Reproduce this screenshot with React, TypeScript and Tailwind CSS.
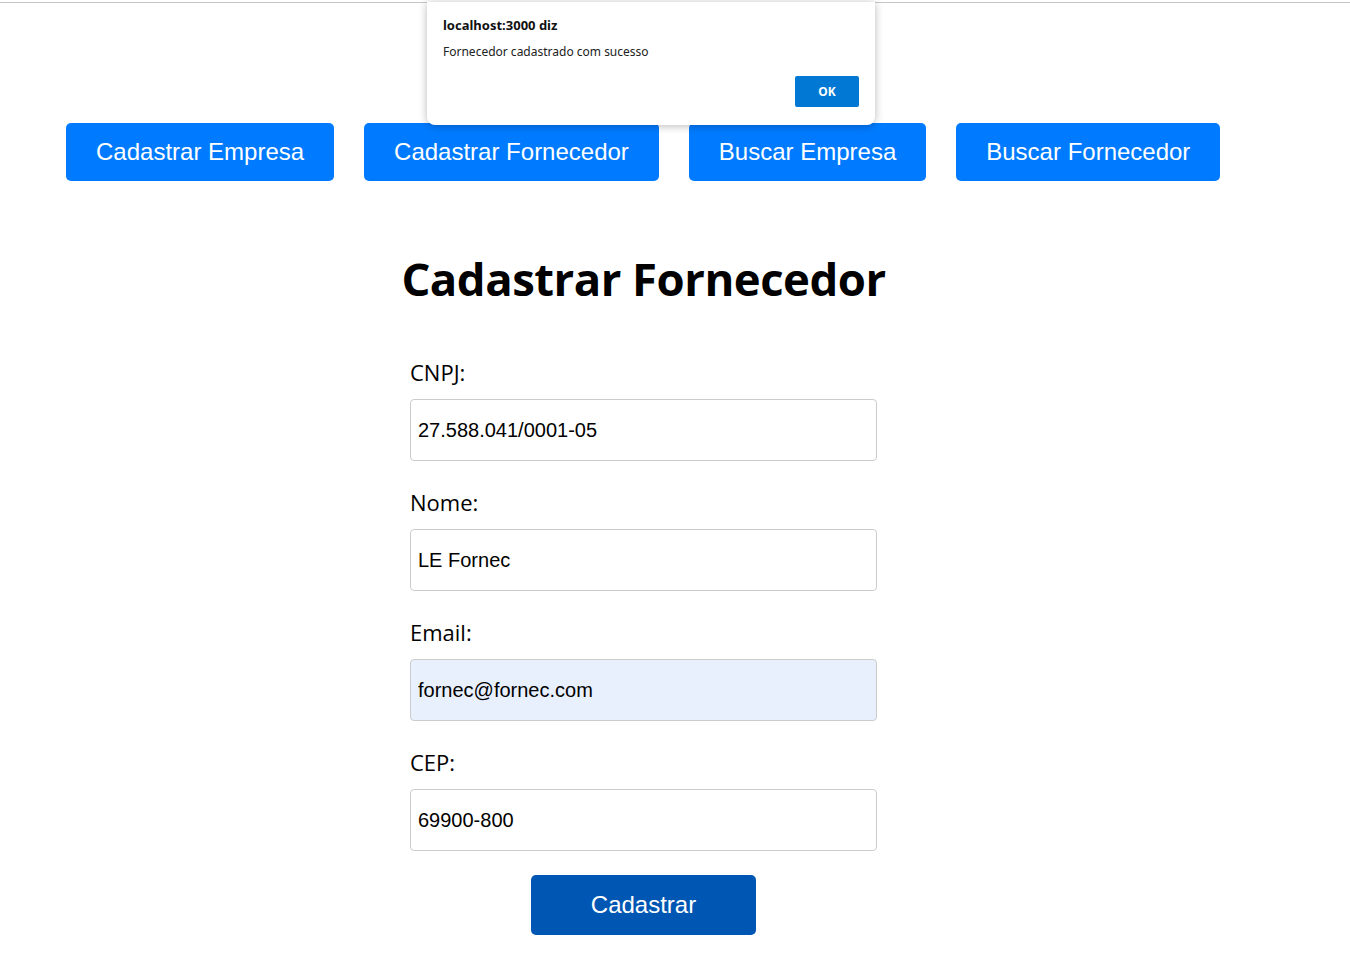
import React from "react";

const navItems = [
  "Cadastrar Empresa",
  "Cadastrar Fornecedor",
  "Buscar Empresa",
  "Buscar Fornecedor",
];

const fields = [
  { label: "CNPJ:", value: "27.588.041/0001-05", filled: false },
  { label: "Nome:", value: "LE Fornec", filled: false },
  { label: "Email:", value: "fornec@fornec.com", filled: true },
  { label: "CEP:", value: "69900-800", filled: false },
];

const App = () => {
  return (
    <div className="relative min-h-[954px] w-full bg-white">
      {/* browser chrome edge */}
      <div className="mt-[2px] h-px w-full bg-[#c6c6c6]" />

      {/* NAV */}
      <nav className="flex gap-[30px] pl-[66px] pt-[120px] font-['Liberation_Sans',sans-serif]">
        {navItems.map((item) => (
          <button
            key={item}
            className="h-[58px] rounded-[5px] bg-[#007bff] px-[30px] text-[24px] text-white"
          >
            {item}
          </button>
        ))}
      </nav>

      {/* FORM */}
      <main className="flex w-[1287px] flex-col items-center">
        <h1 className="mt-[69px] font-['Open_Sans',sans-serif] text-[45.5px] font-bold leading-[56px] tracking-[-0.5px] text-black">
          Cadastrar Fornecedor
        </h1>

        <form className="mt-[51px] flex w-[467px] flex-col">
          {fields.map((f) => (
            <div key={f.label} className="flex flex-col">
              <label className="h-[30px] font-['Open_Sans',sans-serif] text-[22px] leading-[30px] text-black">
                {f.label}
              </label>
              <input
                readOnly
                value={f.value}
                className={
                  "mb-[26px] mt-[12px] h-[62px] w-full rounded-[4px] border border-[#cccccc] px-[7px] font-['Liberation_Sans',sans-serif] text-[20px] text-black outline-none " +
                  (f.filled ? "bg-[#e8f0fe]" : "bg-white")
                }
              />
            </div>
          ))}
          <button
            type="button"
            className="mx-auto -mt-[2px] h-[60px] w-[225px] rounded-[5px] bg-[#0056b3] font-['Liberation_Sans',sans-serif] text-[24px] text-white"
          >
            Cadastrar
          </button>
        </form>
      </main>

      {/* ALERT DIALOG */}
      <div className="absolute left-[427px] top-0 h-[123px] w-[448px] rounded-b-[8px] bg-white font-['Noto_Sans',sans-serif] shadow-[0_1px_8px_rgba(0,0,0,0.28)]">
        <div className="px-[16px] pt-[13px] text-[13px] font-bold leading-[20px] text-[#111]">
          localhost:3000 diz
        </div>
        <div className="px-[16px] pt-[8px] text-[12px] leading-[18px] text-[#222]">
          Fornecedor cadastrado com sucesso
        </div>
        <div className="flex justify-end px-[16px] pt-[15px]">
          <button className="h-[31px] w-[64px] rounded-[2px] bg-[#0078d4] text-[12px] font-bold text-white">
            OK
          </button>
        </div>
      </div>
    </div>
  );
};

export default App;
